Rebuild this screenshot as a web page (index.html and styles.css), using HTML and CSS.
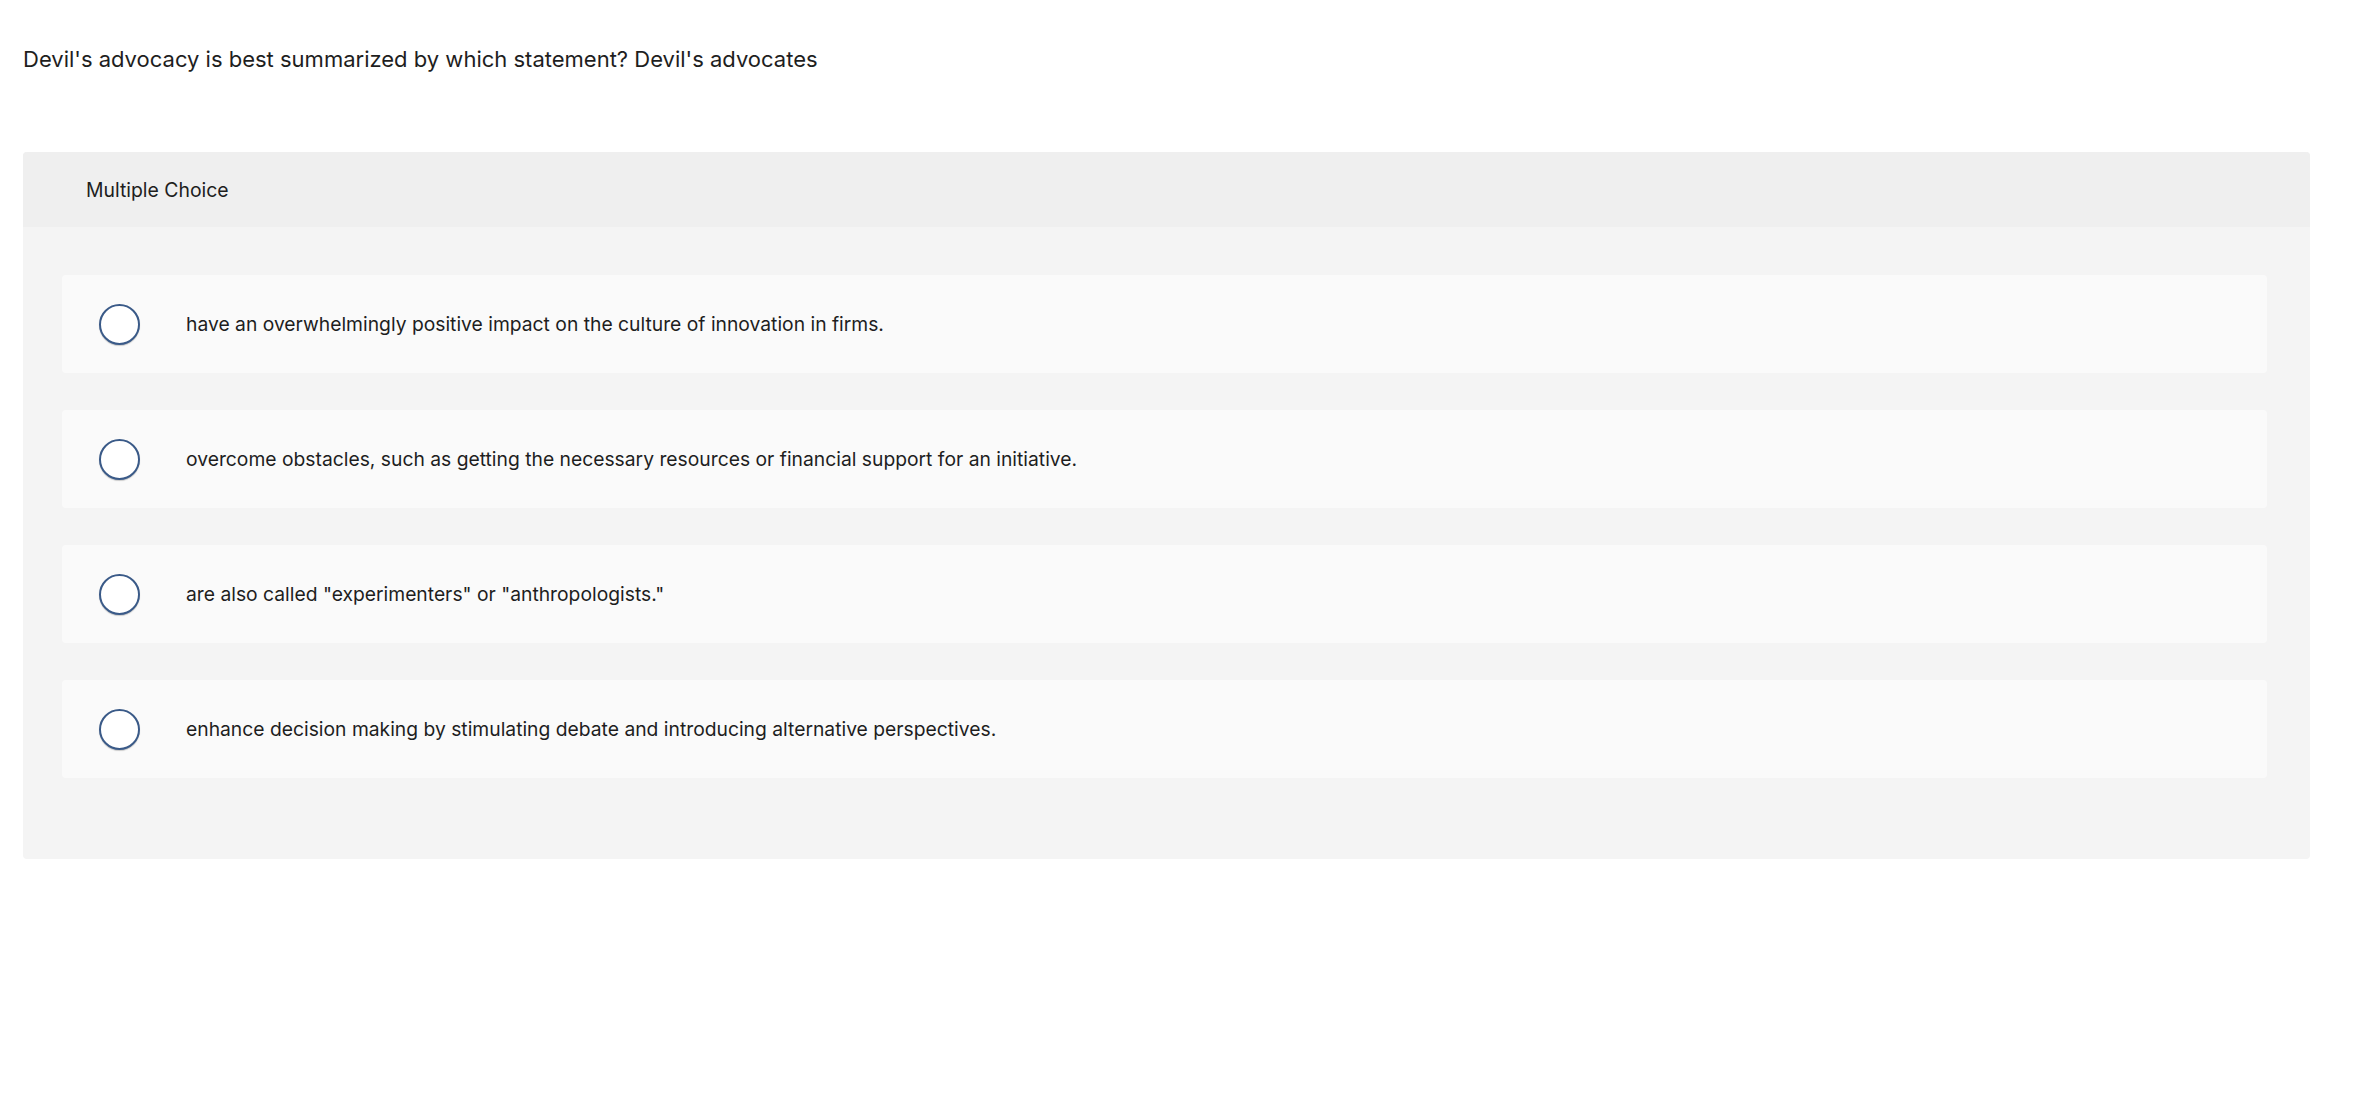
FILE: index.html
```html
<!DOCTYPE html>
<html lang="en">
<head>
<meta charset="utf-8">
<title>Multiple Choice</title>
<link rel="stylesheet" href="styles.css">
</head>
<body>
<div class="page">
  <p class="question">Devil's advocacy is best summarized by which statement? Devil's advocates</p>
  <section class="panel">
    <header class="panel-header">Multiple Choice</header>
    <div class="panel-body">
      <label class="option"><span class="radio"></span><span class="option-text">have an overwhelmingly positive impact on the culture of innovation in firms.</span></label>
      <label class="option"><span class="radio"></span><span class="option-text">overcome obstacles, such as getting the necessary resources or financial support for an initiative.</span></label>
      <label class="option"><span class="radio"></span><span class="option-text">are also called "experimenters" or "anthropologists."</span></label>
      <label class="option"><span class="radio"></span><span class="option-text">enhance decision making by stimulating debate and introducing alternative perspectives.</span></label>
    </div>
  </section>
</div>
</body>
</html>
```
FILE: styles.css
```css
html, body {
  margin: 0;
  padding: 0;
  background: #ffffff;
}
body {
  font-family: "Inter", "Noto Sans", sans-serif;
  color: #1e1e1e;
}
.page {
  padding: 0 62px 0 23px;
}
.question {
  margin: 0;
  padding-top: 44px;
  font-size: 22px;
  line-height: 30px;
  height: 30px;
}
.panel {
  margin-top: 78px;
  background: #f4f4f4;
  border-radius: 4px;
}
.panel-header {
  height: 75px;
  display: flex;
  align-items: center;
  padding-left: 63px;
  background: #efefef;
  border-radius: 4px 4px 0 0;
  font-size: 19.4px;
}
.panel-body {
  display: flex;
  flex-direction: column;
  gap: 37px;
  padding: 48px 43px 81px 39px;
}
.option {
  height: 98px;
  display: flex;
  align-items: center;
  gap: 46px;
  padding-left: 37px;
  background: #fafafa;
  border-radius: 4px;
  font-size: 19.3px;
}
.radio {
  box-sizing: border-box;
  width: 41px;
  height: 41px;
  flex: none;
  border-radius: 50%;
  border: 2px solid #3a5a88;
  background: #ffffff;
  box-shadow: 0 1px 1px rgba(0, 0, 0, 0.2);
}
```
